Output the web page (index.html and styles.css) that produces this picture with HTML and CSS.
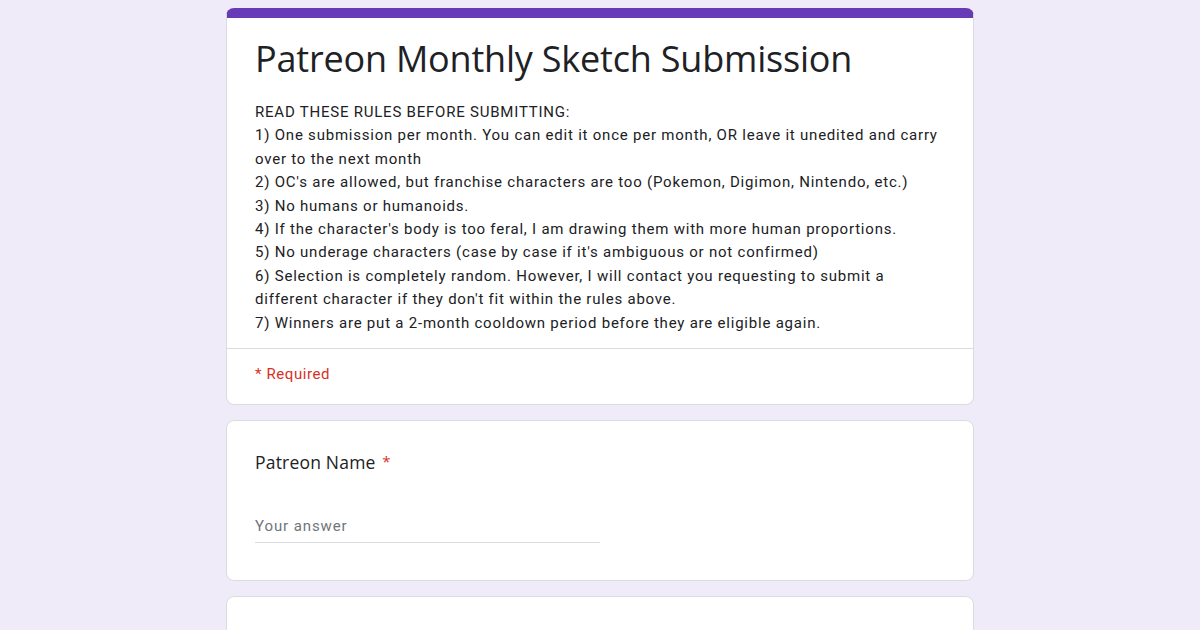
FILE: index.html
```html
<!DOCTYPE html>
<html lang="en">
<head>
  <meta charset="UTF-8">
  <meta name="viewport" content="width=device-width, initial-scale=1.0">
  <title>Patreon Monthly Sketch Submission</title>
  <link rel="stylesheet" href="styles.css">
</head>
<body>
  <div class="form">
    <div class="card header-card">
      <div class="header-body">
        <h1>Patreon Monthly Sketch Submission</h1>
        <div class="description">
          READ THESE RULES BEFORE SUBMITTING:<br>
          1) One submission per month. You can edit it once per month, OR leave it unedited and carry over to the next month<br>
          2) OC's are allowed, but franchise characters are too (Pokemon, Digimon, Nintendo, etc.)<br>
          3) No humans or humanoids.<br>
          4) If the character's body is too feral, I am drawing them with more human proportions.<br>
          5) No underage characters (case by case if it's ambiguous or not confirmed)<br>
          6) Selection is completely random. However, I will contact you requesting to submit a different character if they don't fit within the rules above.<br>
          7) Winners are put a 2-month cooldown period before they are eligible again.
        </div>
      </div>
      <div class="required-note">* Required</div>
    </div>

    <div class="card question">
      <div class="question-title">Patreon Name <span class="star">*</span></div>
      <div class="answer">Your answer</div>
    </div>

    <div class="card question"></div>
  </div>
</body>
</html>
```

FILE: styles.css
```css
body {
  margin: 0;
  background-color: #f0ebf8;
  font-family: Roboto, Arial, sans-serif;
  color: #202124;
}
.form {
  width: 748px;
  margin: 0 auto;
  padding-top: 8px;
}
.card {
  background: white;
  border: 1px solid #dadce0;
  border-radius: 8px;
  margin-bottom: 15px;
}
.header-card {
  border-top: 10px solid #673ab7;
}
.header-body {
  padding: 17px 24px 13px 28px;
  border-bottom: 1px solid #dadce0;
}
h1 {
  font-family: "Open Sans", Roboto, sans-serif;
  font-weight: 400;
  font-size: 36px;
  line-height: 48px;
  margin: 0 0 18px 0;
  letter-spacing: -0.2px;
}
.description {
  font-size: 15px;
  line-height: 23.4px;
  letter-spacing: 0.78px;
}
.required-note {
  color: #d93025;
  font-size: 15px;
  letter-spacing: 0.6px;
  padding: 16px 28px 21px 28px;
}
.question {
  padding: 28px 28px 37px 28px;
}
.question-title {
  font-family: "Open Sans", Roboto, sans-serif;
  font-size: 17.5px;
  line-height: 26px;
  height: 26px;
  letter-spacing: 0.2px;
}
.star {
  color: #d93025;
  font-size: 15px;
  line-height: 1;
  margin-left: 2px;
  vertical-align: 2px;
}
.answer {
  margin-top: 42px;
  width: 345px;
  font-size: 15px;
  color: #70757a;
  padding-bottom: 7px;
  border-bottom: 1px solid #dadce0;
  letter-spacing: 0.9px;
}
```
